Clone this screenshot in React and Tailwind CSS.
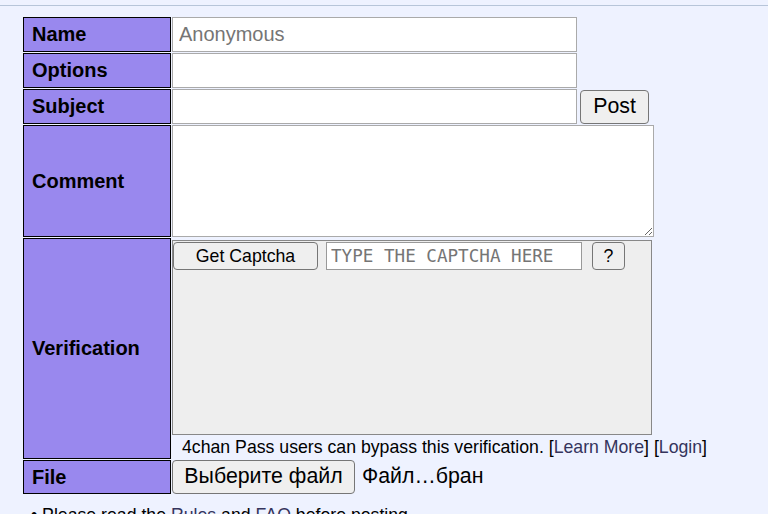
export default function App() {
  const btn =
    "bg-[#efefef] border border-[#767676] rounded-[4px] text-black flex items-center justify-center";
  const label =
    "bg-[#9988ee] border border-black pl-[8px] pb-px flex items-center font-bold text-[20px]";

  return (
    <div className="w-[768px] h-[514px] overflow-hidden bg-[#eef2ff] font-['Liberation_Sans',Arial,sans-serif] text-black">
      <div className="h-[5px]" />
      <div className="h-px bg-[#b7c5d9]" />

      <div className="ml-[23px] mt-[11px] grid grid-cols-[148px_auto] gap-px">
        {/* Name */}
        <div className={`${label} h-[35px]`}>Name</div>
        <div className="h-[35px] flex">
          <input
            placeholder="Anonymous"
            className="w-[405px] h-[35px] bg-white border border-[#aaa] px-[6px] text-[20px] placeholder:text-[#757575] outline-none"
          />
        </div>

        {/* Options */}
        <div className={`${label} h-[35px]`}>Options</div>
        <div className="h-[35px] flex">
          <input className="w-[405px] h-[35px] bg-white border border-[#aaa] outline-none" />
        </div>

        {/* Subject */}
        <div className={`${label} h-[35px]`}>Subject</div>
        <div className="h-[35px] flex items-center gap-[3px]">
          <input className="w-[405px] h-[35px] bg-white border border-[#aaa] outline-none" />
          <button className={`${btn} w-[69px] h-[34px] text-[21.33px]`}>Post</button>
        </div>

        {/* Comment */}
        <div className={`${label} h-[112px]`}>Comment</div>
        <div className="h-[112px] flex">
          <textarea className="w-[482px] h-[112px] bg-white border border-[#aaa] outline-none resize" />
        </div>

        {/* Verification */}
        <div className={`${label} h-[221px]`}>Verification</div>
        <div className="h-[221px] flex flex-col pt-[2px]">
          <div className="w-[480px] h-[195px] bg-[#eeeeee] border border-[#888] pt-px">
            <div className="flex items-center">
              <button className={`${btn} w-[145px] h-[28px] text-[17.7px]`}>Get Captcha</button>
              <input
                placeholder="TYPE THE CAPTCHA HERE"
                className="ml-[8px] w-[256px] h-[28px] bg-white border border-[#999] px-[4px] font-['DejaVu_Sans_Mono',monospace] text-[17.6px] placeholder:text-[#757575] outline-none"
              />
              <button className={`${btn} ml-[10px] w-[33px] h-[28px] text-[17.7px]`}>?</button>
            </div>
          </div>
          <div className="mt-[2px] pl-[10px] text-[17.7px] leading-[21px] whitespace-nowrap">
            4chan Pass users can bypass this verification. [
            <a className="text-[#34345c]">Learn More</a>] [
            <a className="text-[#34345c]">Login</a>]
          </div>
        </div>

        {/* File */}
        <div className={`${label} h-[34px]`}>File</div>
        <div className="h-[34px] flex items-center gap-[7px]">
          <button className={`${btn} w-[183px] h-[34px] text-[21.33px]`}>Выберите файл</button>
          <span className="text-[21.33px]">Файл…бран</span>
        </div>
      </div>

      <div className="ml-[31px] mt-[10px] text-[17.7px] leading-[22px] whitespace-nowrap">
        • Please read the <a className="text-[#34345c]">Rules</a> and{" "}
        <a className="text-[#34345c]">FAQ</a> before posting.
      </div>
    </div>
  );
}
